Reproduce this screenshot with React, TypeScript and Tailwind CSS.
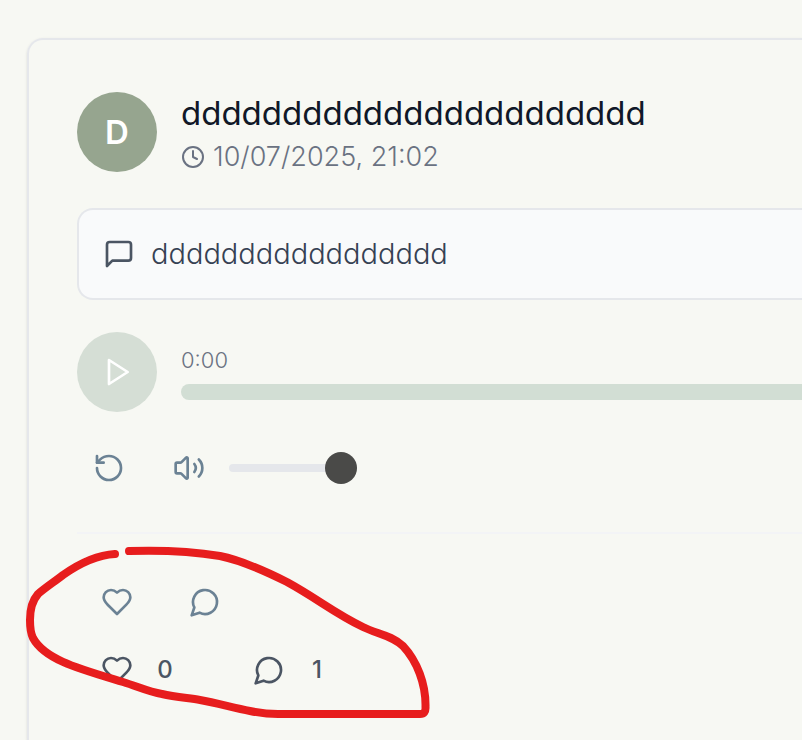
import { useState } from "react";
import type { ReactNode } from "react";
import { Clock, RotateCcw, Volume2 } from "lucide-react";

function Icon({ children, className }: { children: ReactNode; className: string }) {
  return (
    <svg
      aria-hidden="true"
      viewBox="0 0 24 24"
      fill="none"
      stroke="currentColor"
      strokeWidth="2"
      strokeLinecap="round"
      strokeLinejoin="round"
      className={className}
    >
      {children}
    </svg>
  );
}

function HeartIcon() {
  return (
    <Icon className="size-8 shrink-0">
      <path d="M19 14c1.49-1.46 3-3.21 3-5.5A5.5 5.5 0 0 0 16.5 3c-1.76 0-3 .5-4.5 2-1.5-1.5-2.74-2-4.5-2A5.5 5.5 0 0 0 2 8.5c0 2.3 1.5 4.05 3 5.5l7 7Z" />
    </Icon>
  );
}

function CommentIcon() {
  return (
    <Icon className="size-8 shrink-0">
      <path d="M7.9 20A9 9 0 1 0 4 16.1L2 22Z" />
    </Icon>
  );
}

function Header() {
  return (
    <header className="flex items-center gap-6">
      <div className="flex size-20 shrink-0 items-center justify-center rounded-full bg-[#96a58f] text-[33px] leading-10 font-semibold text-white">
        D
      </div>
      <div className="min-w-0">
        <h1 className="text-[33px] leading-[50px] text-gray-900">ddddddddddddddddddddddd</h1>
        <p className="flex items-center gap-2 text-[27px] leading-[38px] font-light text-gray-500">
          <Clock className="size-6 shrink-0" />
          <time dateTime="2025-07-10T21:02">10/07/2025, 21:02</time>
        </p>
      </div>
    </header>
  );
}

function Player() {
  const [volume, setVolume] = useState(100);
  return (
    <section aria-label="Audio player">
      <div className="mt-8 flex items-center gap-6">
        <button
          type="button"
          aria-label="Play"
          className="flex size-20 shrink-0 items-center justify-center rounded-full bg-[#d5ded5] text-white"
        >
          <Icon className="size-8">
            <polygon points="6 3 20 12 6 21 6 3" />
          </Icon>
        </button>
        <div className="flex-1">
          <div className="mb-2 text-[22px] leading-8 font-light text-gray-500">0:00</div>
          <div
            role="progressbar"
            aria-label="Playback position"
            aria-valuenow={0}
            className="h-4 rounded-l-full bg-[#d2ded4]"
          />
        </div>
      </div>
      <div className="mt-6 flex items-center text-[#6b8294]">
        <button type="button" aria-label="Restart" className="mr-4 flex size-16 items-center justify-center">
          <RotateCcw className="size-8" />
        </button>
        <button type="button" aria-label="Mute" className="mr-2 flex size-16 items-center justify-center">
          <Volume2 className="size-8" />
        </button>
        <input
          type="range"
          aria-label="Volume"
          min={0}
          max={100}
          value={volume}
          onChange={(e) => setVolume(Number(e.target.value))}
          className="h-2 w-32 appearance-none rounded-full bg-gray-200 [&::-webkit-slider-thumb]:size-8 [&::-webkit-slider-thumb]:appearance-none [&::-webkit-slider-thumb]:rounded-full [&::-webkit-slider-thumb]:bg-[#4a4a48]"
        />
      </div>
    </section>
  );
}

function Actions() {
  return (
    <footer className="relative mt-8 border-t-2 border-gray-100 pt-8">
      <div className="flex gap-2 text-[#6b8294]">
        <button type="button" aria-label="Like" className="flex h-18 w-20 items-center justify-center">
          <HeartIcon />
        </button>
        <button type="button" aria-label="Comment" className="flex h-18 w-20 items-center justify-center">
          <CommentIcon />
        </button>
      </div>
      <div className="flex gap-8 text-2xl font-medium text-[#4b5563]">
        <button type="button" aria-label="Likes: 0" className="flex h-16 items-center gap-6 px-6">
          <HeartIcon />
          <span className="w-4">0</span>
        </button>
        <button type="button" aria-label="Comments: 1" className="flex h-16 items-center gap-6 px-6">
          <CommentIcon />
          <span className="w-4">1</span>
        </button>
      </div>
      {/* Hand-drawn marker loop over both rows of reactions */}
      <svg
        aria-hidden="true"
        width="420"
        height="190"
        viewBox="20 534 420 190"
        fill="none"
        stroke="#e71d1d"
        strokeWidth="8"
        strokeLinecap="round"
        strokeLinejoin="round"
        className="pointer-events-none absolute top-0 -left-[57px]"
      >
        <path d="M115 554C98 555 80 563 63 575C54 582 46 587 38 594C31 602 30 611 30 620C30 627 30 632 33 638C45 660 80 669 123 682C139 687 149 692 162 694C175 697 188 698 200 700C217 703 234 708 250 711C260 713 269 714 278 714H420Q426 714 425.500 707C426 684 417 661 403 646C391 635 377 634 363 627C334 613 318 599 287 582C271 574 240 560 220 556C190 551 160 550 129 551" />
      </svg>
    </footer>
  );
}

export default function App() {
  return (
    <main className="flex min-h-screen flex-col overflow-hidden bg-[#f7f8f3] pt-[38px] pl-[27px] font-[Inter,sans-serif]">
      <article className="flex-1 rounded-tl-2xl border-t-2 border-l-2 border-gray-200 pt-12 pl-12 shadow-sm">
        <Header />
        <section
          aria-label="Message"
          className="mt-8 flex items-center gap-4 rounded-l-2xl border-y-2 border-l-2 border-gray-200 bg-gray-50 p-6 text-[29px] leading-10 font-light text-gray-700"
        >
          <Icon className="size-8 shrink-0 text-[#4b5563]">
            <path d="M21 15a2 2 0 0 1-2 2H7l-4 4V5a2 2 0 0 1 2-2h14a2 2 0 0 1 2 2z" />
          </Icon>
          <p>ddddddddddddddddd</p>
        </section>
        <Player />
        <Actions />
      </article>
    </main>
  );
}
